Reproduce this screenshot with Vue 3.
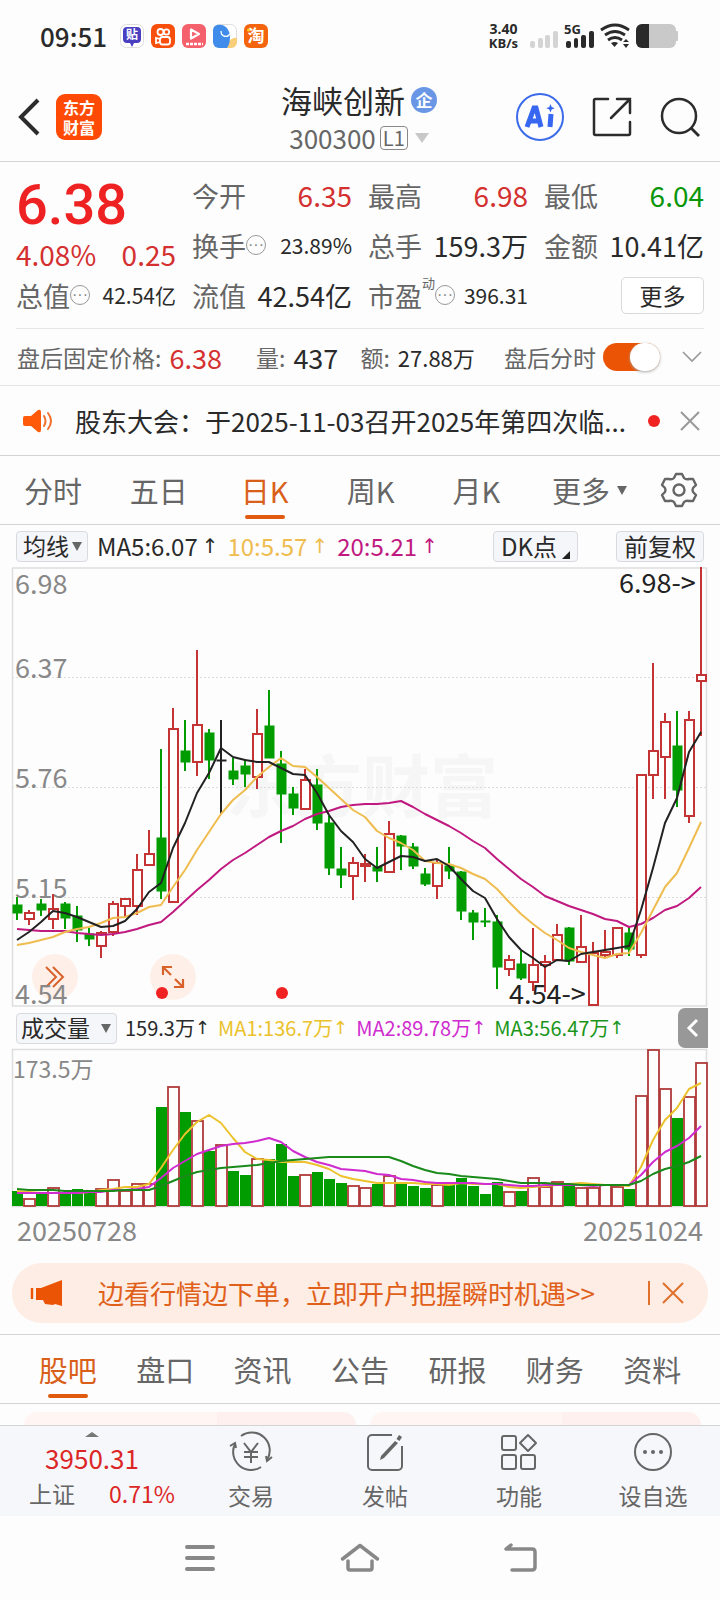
<script setup>
import { ref } from 'vue'

const afterHours = ref(true)
const period = ref('日K')
const section = ref('股吧')
const periods = ['分时', '五日', '日K', '周K', '月K']
const sections = ['股吧', '盘口', '资讯', '公告', '研报', '财务', '资料']

const STEP = 12
const cx = (i) => 5 + i * STEP

// kind (u: up, d: down, n: flat), high, body top, body bottom, low, in chart units
const candles = [
  ['d', 330, 338, 346, 353], ['u', 343, 346, 352, 358], ['d', 332, 337, 343, 349], ['u', 327, 342, 352, 362],
  ['d', 335, 337, 351, 362], ['d', 339, 349, 363, 375], ['d', 361, 367, 372, 379], ['u', 364, 366, 379, 391],
  ['u', 334, 337, 365, 369], ['u', 331, 332, 339, 350], ['u', 287, 303, 339, 348], ['u', 263, 287, 298, 299],
  ['d', 182, 271, 324, 332], ['u', 141, 162, 335, 335], ['d', 153, 184, 195, 204], ['u', 83, 158, 195, 209],
  ['d', 162, 166, 193, 212], ['n', 153, 193, 193, 247], ['d', 191, 204, 212, 218], ['d', 192, 199, 207, 220],
  ['u', 142, 167, 210, 222], ['d', 123, 159, 191, 191], ['d', 184, 197, 227, 276], ['d', 220, 227, 241, 248],
  ['u', 202, 213, 242, 243], ['d', 202, 218, 256, 263], ['d', 249, 256, 301, 308], ['d', 280, 302, 308, 321],
  ['u', 290, 296, 309, 333], ['u', 287, 297, 299, 315], ['d', 280, 300, 304, 315], ['u', 254, 267, 305, 305],
  ['d', 268, 269, 279, 303], ['d', 276, 280, 299, 302], ['d', 301, 307, 317, 319], ['u', 293, 296, 319, 332],
  ['d', 280, 299, 304, 312], ['d', 304, 305, 344, 353], ['d', 343, 346, 355, 373], ['d', 341, 354, 355, 360],
  ['d', 348, 355, 400, 422], ['u', 388, 393, 402, 409], ['d', 384, 397, 411, 413], ['u', 361, 398, 415, 424],
  ['u', 388, 395, 398, 425], ['u', 357, 368, 393, 394], ['d', 360, 361, 394, 398], ['u', 348, 380, 395, 396],
  ['u', 375, 386, 438, 439], ['u', 363, 385, 388, 390], ['u', 360, 361, 388, 391], ['d', 360, 366, 382, 389],
  ['u', 207, 208, 388, 391], ['u', 96, 184, 208, 232], ['u', 146, 155, 190, 232], ['d', 144, 179, 223, 240],
  ['u', 144, 153, 249, 256], ['u', 0, 108, 114, 169]
]
const ma5 = [373, 365, 355, 344, 346, 350, 355, 360, 359, 354, 342, 325, 316, 281, 256, 226, 206, 181, 190, 193, 195, 195, 201, 207, 208, 226, 248, 264, 275, 292, 301, 295, 289, 290, 294, 292, 299, 312, 324, 331, 352, 370, 383, 391, 400, 393, 394, 387, 385, 383, 381, 379, 343, 301, 256, 231, 185, 165]
const ma10 = [378, 376, 373, 370, 365, 362, 360, 356, 351, 350, 346, 340, 338, 320, 303, 283, 265, 247, 233, 223, 210, 200, 191, 199, 200, 210, 221, 232, 243, 250, 264, 271, 276, 283, 294, 296, 297, 301, 307, 312, 322, 335, 347, 357, 366, 373, 381, 385, 388, 391, 387, 386, 366, 343, 320, 306, 281, 255]
const ma20 = [362, 363, 364, 364, 364, 366, 367, 368, 367, 365, 362, 358, 355, 345, 334, 323, 313, 302, 293, 286, 278, 270, 264, 259, 252, 247, 244, 240, 238, 237, 237, 236, 234, 240, 247, 253, 259, 266, 274, 281, 292, 302, 312, 320, 329, 334, 339, 343, 347, 352, 354, 360, 357, 351, 343, 339, 331, 320]

const volumes = [15, 8, 13, 19, 12, 17, 13, 18, 27, 16, 23, 23, 99, 120, 94, 86, 55, 62, 35, 31, 48, 47, 62, 30, 32, 34, 27, 23, 21, 19, 22, 31, 22, 20, 18, 22, 22, 28, 20, 12, 24, 15, 15, 29, 20, 25, 22, 19, 19, 22, 20, 17, 111, 157, 118, 88, 110, 144]
const volMa1 = [15, 14, 13, 13, 13, 13, 14, 16, 17, 19, 19, 22, 38, 56, 72, 84, 91, 83, 68, 54, 47, 46, 44, 44, 44, 41, 37, 30, 27, 25, 23, 23, 23, 23, 22, 22, 21, 23, 22, 22, 22, 19, 18, 19, 20, 21, 22, 23, 22, 21, 21, 20, 39, 66, 86, 98, 117, 123]
const volMa2 = [13, 13, 13, 13, 13, 13, 14, 14, 16, 16, 17, 19, 28, 38, 45, 52, 56, 60, 62, 63, 65, 68, 64, 55, 49, 44, 41, 37, 36, 35, 32, 31, 27, 26, 24, 23, 23, 23, 23, 22, 22, 21, 20, 20, 21, 21, 21, 21, 20, 21, 21, 21, 31, 44, 54, 60, 68, 80]
const volMa3 = [17, 16, 16, 16, 15, 15, 15, 15, 15, 16, 16, 16, 20, 25, 30, 34, 36, 38, 39, 40, 41, 43, 45, 46, 47, 48, 49, 49, 49, 49, 49, 49, 45, 40, 36, 33, 32, 30, 29, 28, 27, 25, 23, 23, 23, 22, 22, 21, 21, 21, 21, 21, 25, 32, 37, 40, 44, 50]

const line = (values) => values.map((v, i) => `${cx(i)},${v}`).join(' ')
const volLine = (values) => values.map((v, i) => `${cx(i)},${157 - v}`).join(' ')
</script>

<template>
  <div class="page">
    <header class="status">
      <time class="clock">09:51</time>
      <div class="apps">
        <svg viewBox="0 0 24 24"><rect x=".5" y=".5" width="23" height="23" rx="6" fill="#fff" stroke="#ddd" /><path d="M7 3h10q4 0 4 4v8q0 4-4 4h-3l-2 4-2-4H7q-4 0-4-4V7q0-4 4-4z" fill="#4a3fc0" /><text x="12" y="15" font-size="12" font-weight="700" fill="#fff" text-anchor="middle">贴</text></svg>
        <svg viewBox="0 0 24 24"><rect width="24" height="24" rx="6" fill="#f8500c" /><g fill="none" stroke="#fff" stroke-width="1.800"><circle cx="9.500" cy="8" r="3" /><circle cx="15.500" cy="8" r="2.700" /><rect x="9" y="13" width="10" height="7.500" rx="2.500" /><path d="M9 15l-4-1v5l4-1" /></g></svg>
        <svg viewBox="0 0 24 24"><rect width="24" height="24" rx="6" fill="#f4606c" /><path d="M9 5.500l8 4.500-8 4.500z" fill="none" stroke="#fff" stroke-width="2.200" stroke-linejoin="round" /><path d="M4 20h17" stroke="#fff" stroke-width="2.500" stroke-dasharray="3 1" /></svg>
        <svg viewBox="0 0 24 24"><rect x=".5" y=".5" width="23" height="23" rx="6" fill="#fff" stroke="#ddd" /><path d="M24 14v4a6 6 0 0 1-6 6h-4c0-6 5-11 10-10z" fill="#f8ce78" /><path d="M0 6a6 6 0 0 1 4-5c8-2 13 5 13 12 0 5-1 8-3 11H6a6 6 0 0 1-6-6z" fill="#3f8cea" /><path d="M8 7c0 6 6 7 9 3" fill="none" stroke="#fff" stroke-width="1.300" /></svg>
        <svg viewBox="0 0 24 24"><rect width="24" height="24" rx="6" fill="#f4640c" /><text x="12" y="18" font-size="17" font-weight="700" fill="#fff" text-anchor="middle">淘</text><circle cx="4.500" cy="6" r="1.500" fill="#ffd21e" /></svg>
      </div>
      <div class="rate"><b>3.40</b><b>KB/s</b></div>
      <svg class="signals" viewBox="0 0 150 26">
        <g fill="#d4d4d4"><rect x="0" y="18" width="5" height="7" rx="2" /><rect x="8" y="15" width="5" height="10" rx="2" /><rect x="15" y="12" width="5" height="13" rx="2" /><rect x="23" y="8" width="5" height="17" rx="2" /></g>
        <text x="34" y="11" font-size="13" font-weight="700" fill="#2a2a2a">5G</text>
        <g fill="#2a2a2a"><rect x="36" y="18" width="5" height="7" rx="2" /><rect x="44" y="15" width="4" height="10" rx="2" /><rect x="51" y="12" width="5" height="13" rx="2" /><rect x="59" y="8" width="5" height="17" rx="2" /></g>
        <g fill="none" stroke="#2a2a2a" stroke-width="2.800"><path d="M71 7q14-10 28 0" /><path d="M75 12q10-7 20 0" /><path d="M78 17q7-5 14 0" /></g>
        <path d="M81 20q4-2 7 0l-3.500 4zM93 19l3-3 3 3zM93 21h6l-3 4z" fill="#2a2a2a" />
        <rect x="106" y="1" width="40" height="24" rx="6" fill="#c9c9c9" /><rect x="145" y="8" width="3" height="10" rx="1" fill="#c9c9c9" /><path d="M112 1h7v24h-7a6 6 0 0 1-6-6V7a6 6 0 0 1 6-6z" fill="#2a2a2a" />
      </svg>
    </header>

    <nav class="top">
      <div class="side">
        <button class="plain" aria-label="返回"><svg width="22" height="38" viewBox="0 0 22 38"><path d="M20 2L3 19l17 17" fill="none" stroke="#2c2c2c" stroke-width="4" /></svg></button>
        <span class="brand"><span>东方</span><span>财富</span></span>
      </div>
      <div class="stock">
        <h1>海峡创新<i class="corp">企</i></h1>
        <p>300300<span class="level">L1</span><i class="tri"></i></p>
      </div>
      <div class="side right">
        <button class="plain" aria-label="Ai"><svg width="48" height="48" viewBox="0 0 48 48"><circle cx="24" cy="24" r="23" fill="none" stroke="#3b6bea" stroke-width="2" /><g fill="none" stroke="#3766f0" stroke-width="5"><path d="M11 34l7-19h2l5 19M14 28h10" /><path d="M35 21l-1 13" /></g><path d="M34.500 11l1.200 3 3 1.200-3 1.200-1.200 3-1.200-3-3-1.200 3-1.200z" fill="#3766f0" /></svg></button>
        <button class="plain" aria-label="分享"><svg width="40" height="40" viewBox="0 0 40 40"><g fill="none" stroke="#2c2c2c" stroke-width="2.500" stroke-linecap="round"><path d="M16 2H3.500A1.500 1.500 0 0 0 2 3.500v33A1.500 1.500 0 0 0 3.500 38h33a1.500 1.500 0 0 0 1.500-1.500V25" /><path d="M25 2h13v14M38 2L19 21" /></g></svg></button>
        <button class="plain" aria-label="搜索"><svg width="40" height="40" viewBox="0 0 40 40"><circle cx="19" cy="19" r="17" fill="none" stroke="#2c2c2c" stroke-width="2.500" /><path d="M31 31l8 8" stroke="#2c2c2c" stroke-width="2.800" /></svg></button>
      </div>
    </nav>

    <section class="quote">
      <div class="last">
        <strong>6.38</strong>
        <div class="change"><span>4.08%</span><span>0.25</span></div>
      </div>
      <div class="cell"><span class="name">今开</span><b class="big up">6.35</b></div>
      <div class="cell"><span class="name">最高</span><b class="big up">6.98</b></div>
      <div class="cell"><span class="name">最低</span><b class="big down">6.04</b></div>
      <div class="cell"><span class="name">换手<i class="dots">···</i></span><b class="small">23.89%</b></div>
      <div class="cell"><span class="name">总手</span><b>159.3万</b></div>
      <div class="cell"><span class="name">金额</span><b>10.41亿</b></div>
      <div class="cell"><span class="name">总值<i class="dots">···</i></span><b class="small">42.54亿</b></div>
      <div class="cell"><span class="name">流值</span><b>42.54亿</b></div>
      <div class="cell"><span class="name">市盈<sup>动</sup><i class="dots">···</i></span><b class="small">396.31</b></div>
      <div class="cell end"><button class="more">更多</button></div>
    </section>

    <section class="after">
      <span class="fixed">盘后固定价格: <b class="up">6.38</b></span>
      <span>量: <b>437</b></span>
      <span>额: <b class="mid">27.88万</b></span>
      <label class="toggle">盘后分时<input v-model="afterHours" type="checkbox"></label>
      <button class="plain" aria-label="展开"><svg width="20" height="12" viewBox="0 0 20 12"><path d="M1 1l9 9 9-9" fill="none" stroke="#999" stroke-width="1.600" /></svg></button>
    </section>

    <section class="notice">
      <svg width="30" height="24" viewBox="0 0 30 24"><path d="M2 7h6l7-6q3-1 3 2v18q0 3-3 2l-7-6H2q-2 0-2-2V9q0-2 2-2z" fill="#ff5a0a" /><path d="M21 7q3 5 0 10M25 4q6 8 0 16" fill="none" stroke="#f0702c" stroke-width="2" stroke-linecap="round" /></svg>
      <a href="#">股东大会：于2025-11-03召开2025年第四次临...</a>
      <i class="unread"></i>
      <button class="plain" aria-label="关闭"><svg width="20" height="20" viewBox="0 0 20 20"><path d="M1 1l18 18M19 1L1 19" stroke="#999" stroke-width="2" /></svg></button>
    </section>

    <nav class="periods">
      <button v-for="p in periods" :key="p" :class="['tab', { on: p === period }]" @click="period = p">{{ p }}</button>
      <button class="tab">更多<i class="caret"></i></button>
      <button class="plain gear" aria-label="设置"><svg width="36" height="36" viewBox="0 0 36 36"><g fill="none" stroke="#666" stroke-width="2.400" stroke-linejoin="round"><path d="M15 2h6l2 4q2 2 5 1l4 0 3 6-3 3q-1 2 0 4l3 3-3 6-4 0q-3-1-5 1l-2 4h-6l-2-4q-2-2-5-1l-4 0-3-6 3-3q1-2 0-4l-3-3 3-6 4 0q3 1 5-1z" /><circle cx="18" cy="18" r="5.500" /></g></svg></button>
    </nav>

    <div class="averages">
      <div class="drop"><select aria-label="均线"><option>均线</option></select><i class="caret"></i></div>
      <span class="ma">MA5:6.07<i>↑</i></span>
      <span class="ma yellow">10:5.57<i>↑</i></span>
      <span class="ma purple">20:5.21<i>↑</i></span>
      <button class="chip dk">DK点<i></i></button>
      <button class="chip">前复权</button>
    </div>

    <div class="chart">
      <button class="float first" aria-label="快进"><svg width="20" height="22" viewBox="0 0 20 22"><path d="M1 1l10 10L1 21M8 1l10 10L8 21" fill="none" stroke="#d9622a" stroke-width="2" /></svg></button>
      <button class="float second" aria-label="全屏"><svg width="24" height="24" viewBox="0 0 24 24"><path d="M2 10V2h9M2 2l8 8M22 14v8h-9M22 22l-8-8" fill="none" stroke="#d9622a" stroke-width="2.200" /></svg></button>
      <svg class="plot" viewBox="0 0 696 440" role="img" aria-label="日K线图">
        <text x="214" y="245" font-size="68" font-weight="700" fill="#f6f6f6">东方财富</text>
        <g stroke="#dcdcdc" stroke-dasharray="2 2"><path d="M0 110.500H695M0 220.500H695M0 330.500H695" /></g>
        <rect x=".5" y="1" width="694" height="438" fill="none" stroke="#dedede" stroke-width="1.500" />
        <g class="axis"><text x="3" y="27">6.98</text><text x="3" y="111">6.37</text><text x="3" y="221">5.76</text><text x="3" y="331">5.15</text><text x="3" y="437">4.54</text></g>
        <g v-for="(c, i) in candles" :key="i" :class="['candle', c[0]]">
          <path :d="`M${cx(i)} ${c[1]}V${c[2]}M${cx(i)} ${c[3]}V${c[4]}`" />
          <rect :x="cx(i) - 4" :y="c[2]" width="9" :height="Math.max(c[3] - c[2], 1)" />
        </g>
        <g class="lines">
          <polyline :points="line(ma20)" stroke="#c01a80" />
          <polyline :points="line(ma10)" stroke="#efbc50" />
          <polyline :points="line(ma5)" stroke="#222" />
        </g>
        <circle cx="150" cy="426" r="6" fill="#f02222" /><circle cx="270" cy="426" r="6" fill="#f02222" />
        <g class="mark"><text x="607" y="26">6.98-&gt;</text><text x="497" y="437">4.54-&gt;</text></g>
      </svg>
    </div>

    <div class="volume-head">
      <div class="drop"><select aria-label="指标"><option>成交量</option></select><i class="caret"></i></div>
      <span class="vol">159.3万<i>↑</i></span>
      <span class="vol gold">MA1:136.7万<i>↑</i></span>
      <span class="vol violet">MA2:89.78万<i>↑</i></span>
      <span class="vol green">MA3:56.47万<i>↑</i></span>
      <button class="collapse" aria-label="收起"><svg width="12" height="20" viewBox="0 0 12 20"><path d="M10 2l-8 8 8 8" fill="none" stroke="#fff" stroke-width="3" /></svg></button>
    </div>

    <div class="chart">
      <svg class="plot" viewBox="0 0 696 158" role="img" aria-label="成交量图">
        <rect x=".5" y=".5" width="694" height="157" fill="none" stroke="#dedede" stroke-width="1.500" />
        <text class="axis vmax" x="1" y="29">173.5万</text>
        <template v-for="(v, i) in volumes" :key="i">
          <rect v-if="candles[i][0] === 'd'" :x="cx(i) - 5" :y="157 - v" width="11" :height="v" fill="#009c00" />
          <rect v-else :x="cx(i) - 5" :y="158 - v" width="11" :height="v - 1" fill="#fff" stroke="#b03a3a" stroke-width="1.800" />
        </template>
        <g class="lines">
          <polyline :points="volLine(volMa1)" stroke="#ecc22c" />
          <polyline :points="volLine(volMa2)" stroke="#cf2bcf" />
          <polyline :points="volLine(volMa3)" stroke="#1a8a1a" />
        </g>
      </svg>
    </div>
    <div class="dates"><time>20250728</time><time>20251024</time></div>

    <aside class="promo">
      <svg width="32" height="26" viewBox="0 0 32 26"><path d="M1 8v11" stroke="#ea5404" stroke-width="2.400" /><path d="M5 8h5L31 0v26l-7-2-2 1-8-1-2-4H5z" fill="#ea5404" /></svg>
      <a href="#">边看行情边下单，立即开户把握瞬时机遇&gt;&gt;</a>
      <button class="plain" aria-label="关闭广告"><svg width="22" height="22" viewBox="0 0 22 22"><path d="M1 1l20 20M21 1L1 21" stroke="#e0702c" stroke-width="2" /></svg></button>
    </aside>

    <nav class="sections">
      <button v-for="s in sections" :key="s" :class="['tab', { on: s === section }]" @click="section = s">{{ s }}</button>
    </nav>
    <div class="cards"><div></div><div></div></div>

    <footer class="dock">
      <a class="index" href="#"><i></i><b>3950.31</b><span>上证<em>0.71%</em></span></a>
      <a href="#"><svg viewBox="0 0 42 40"><g fill="none" stroke="#666" stroke-width="2"><path d="M11 4a18 18 0 0 1 26 24M31 35A18 18 0 0 1 5 12" /><path d="M42 25l-5 4-1-5M0 14l5-3 1 5" /><path d="M14 11l7 9 7-9M14 20h14M14 25h14M21 20v11" /></g></svg>交易</a>
      <a href="#"><svg viewBox="0 0 42 40"><path d="M28 3H8a4 4 0 0 0-4 4v27a4 4 0 0 0 4 4h26a4 4 0 0 0 4-4V14" fill="none" stroke="#666" stroke-width="2" /><path d="M35 3l3 2-2.500 4-3-2zM31 9l3 2-14 15-4 2 1-4z" fill="#666" /></svg>发帖</a>
      <a href="#"><svg viewBox="0 0 42 40"><g fill="none" stroke="#666" stroke-width="2"><rect x="4" y="4" width="14" height="14" rx="2" /><rect x="4" y="23" width="14" height="14" rx="2" /><rect x="23" y="23" width="14" height="14" rx="2" /><path d="M30 3l8 8-8 8-8-8z" stroke-linejoin="round" /></g></svg>功能</a>
      <a href="#"><svg viewBox="0 0 42 40"><circle cx="21" cy="20" r="18" fill="none" stroke="#666" stroke-width="2" /><g fill="#666"><circle cx="13" cy="20" r="2" /><circle cx="21" cy="20" r="2" /><circle cx="29" cy="20" r="2" /></g></svg>设自选</a>
    </footer>

    <nav class="system">
      <button class="plain" aria-label="菜单"><svg width="40" height="30" viewBox="0 0 40 30"><path d="M7 4h26M7 15h26M7 26h26" stroke="#888" stroke-width="4" stroke-linecap="round" /></svg></button>
      <button class="plain" aria-label="主页"><svg width="40" height="30" viewBox="0 0 40 30"><path d="M2.500 16L20 2.500 37.500 16M8 18v7q0 2 2 2h20q2 0 2-2v-7" fill="none" stroke="#888" stroke-width="3.500" stroke-linecap="round" stroke-linejoin="round" /></svg></button>
      <button class="plain" aria-label="后退"><svg width="40" height="30" viewBox="0 0 40 30"><path d="M11 2L6 6h26q3 0 3 3v15q0 3-3 3H12" fill="none" stroke="#888" stroke-width="3.500" stroke-linecap="round" stroke-linejoin="round" /></svg></button>
    </nav>
  </div>
</template>

<style>
body { background: #fdfdfd; }
</style>

<style scoped>
.page { font-family: "Noto Sans CJK SC", "Noto Sans", sans-serif; color: #2a2a2a; background: #fdfdfd; }
.page * { box-sizing: border-box; }
button, select { font: inherit; color: inherit; margin: 0; padding: 0; }
a { color: inherit; text-decoration: none; }
b, i, em, strong { font-weight: 400; font-style: normal; }
h1, p { margin: 0; font-weight: 400; }
svg { display: block; flex: none; overflow: visible; }
.plain { border: 0; background: none; display: flex; align-items: center; justify-content: center; }

.status { height: 72px; padding: 0 40px; display: flex; align-items: center; }
.clock { font-size: 26px; line-height: 36px; font-weight: 500; width: 80px; }
.apps { display: flex; gap: 7px; flex: 1; }
.apps svg { width: 24px; height: 24px; }
.rate { display: flex; flex-direction: column; align-items: center; margin-right: 12px; font-family: "Open Sans", sans-serif; }
.rate b { font-size: 13px; line-height: 14px; font-weight: 700; }
.rate b:first-child { font-size: 14px; }
.signals { width: 150px; height: 26px; font-family: "Open Sans", sans-serif; }

.top { height: 90px; padding: 0 20px 0 18px; display: grid; grid-template-columns: 1fr auto 1fr; align-items: center; border-bottom: 1px solid #d4d4d4; }
.side { display: flex; align-items: center; gap: 16px; }
.side.right { justify-content: flex-end; gap: 28px; }
.brand { width: 46px; height: 46px; border-radius: 9px; background: #ff4a05; color: #fff; font-weight: 700; font-size: 16px; line-height: 20px; display: flex; flex-direction: column; align-items: center; justify-content: center; }
.stock h1 { font-size: 31px; line-height: 40px; display: flex; align-items: center; gap: 6px; }
.corp { width: 26px; height: 26px; border-radius: 50%; background: #6a96e6; color: #fff; font-size: 17px; font-weight: 700; line-height: 25px; text-align: center; }
.stock { padding-top: 2px; }
.stock p { font-size: 26px; line-height: 36px; color: #666; display: flex; align-items: center; justify-content: center; gap: 4px; }
.level { border: 1px solid #888; border-radius: 4px; font-size: 20px; line-height: 22px; padding: 0 2px; }
.tri { border: 7px solid transparent; border-top: 10px solid #c8c8c8; border-bottom: 0; margin-left: 3px; }

.quote { margin: 0 16px; padding: 8px 0; display: grid; grid-template-columns: repeat(4, 1fr); grid-auto-rows: 50px; column-gap: 16px; border-bottom: 1px solid #e6e6e6; }
.last { grid-row: span 2; padding-top: 2px; color: #ee2222; }
.last strong { display: block; font-family: Roboto, sans-serif; font-size: 56px; line-height: 66px; font-weight: 500; }
.change { display: flex; justify-content: space-between; font-size: 28px; line-height: 32px; color: #d43030; }
.cell { display: flex; align-items: center; justify-content: space-between; white-space: nowrap; }
.cell .name { font-size: 27px; color: #666; display: flex; align-items: center; }
.cell b { font-size: 27px; }
.cell b.big { font-size: 28px; }
.cell b.small { font-size: 21px; }
.cell.end { justify-content: flex-end; }
b.up { color: #d43030; }
b.down { color: #0a960a; }
.cell sup { font-size: 13px; line-height: 14px; align-self: flex-start; }
.dots { width: 20px; height: 20px; border: 1px solid #999; border-radius: 50%; color: #888; font-size: 16px; line-height: 17px; display: inline-flex; justify-content: center; font-family: "Liberation Sans", sans-serif; }
.more { width: 83px; height: 37px; border: 1px solid #dadada; border-radius: 5px; background: #fff; font-size: 23px; line-height: 33px; }

.after { height: 57px; padding: 0 18px 0 17px; display: flex; align-items: center; justify-content: space-between; font-size: 23px; color: #666; border-bottom: 1px solid #e6e6e6; white-space: nowrap; }
.after span { display: flex; align-items: center; gap: 8px; }
.after .fixed { margin-right: 12px; }
.after b { font-size: 27px; color: #2a2a2a; }
.after b.mid { font-size: 22px; }
.after b.up { color: #d43030; }
.toggle { display: flex; align-items: center; gap: 7px; margin-left: 7px; }
.toggle input { appearance: none; margin: 0; width: 57px; height: 28px; border-radius: 14px; background: #ccc; display: flex; }
.toggle input::before { content: ""; width: 30px; height: 28px; border-radius: 15px; background: #fff; box-shadow: 0 1px 3px #aaa; }
.toggle input:checked { background: #ea5404; justify-content: flex-end; }

.notice { height: 70px; padding: 0 20px 0 23px; display: flex; align-items: center; border-bottom: 1px solid #d4d4d4; }
.notice a { flex: 1; margin: 0 0 0 22px; font-size: 26px; line-height: 38px; white-space: nowrap; }
.unread { width: 12px; height: 12px; border-radius: 50%; background: #f02222; margin-right: 20px; }

.periods { height: 69px; display: grid; grid-template-columns: repeat(5, 15fr) 17fr 10fr; border-bottom: 1px solid #d4d4d4; }
.periods .gear { padding-right: 12px; }
.tab { position: relative; height: 68px; border: 0; background: none; font-size: 29px; line-height: 40px; color: #666; display: flex; align-items: center; justify-content: center; gap: 7px; }
.tab.on { color: #d9601a; }
.tab.on::after { content: ""; position: absolute; left: 50%; bottom: 5px; width: 40px; height: 4px; margin-left: -20px; border-radius: 2px; background: #e05a10; }
.caret { border: 5px solid transparent; border-top: 9px solid #666; border-bottom: 0; }

.averages { height: 42px; padding: 0 16px; display: flex; align-items: center; gap: 9px; white-space: nowrap; }
.drop { position: relative; display: flex; align-items: center; }
.drop select { appearance: none; height: 31px; width: 72px; padding: 0 0 2px 6px; border: 1px solid #d8dade; border-radius: 4px; background: #f5f6f9; font-size: 23px; line-height: 27px; }
.drop .caret { position: absolute; right: 6px; pointer-events: none; }
.ma { font-size: 24px; line-height: 34px; display: flex; align-items: center; gap: 4px; }
.ma i, .vol i { font-family: "DejaVu Sans", sans-serif; font-size: 20px; line-height: 24px; }
.yellow { color: #efbc50; }
.purple { color: #c01a80; }
.chip { height: 31px; padding: 0 7px 2px; border: 1px solid #d8dade; border-radius: 4px; background: #f5f6f9; font-size: 24px; line-height: 27px; }
.chip.dk { margin-left: auto; margin-right: 29px; display: flex; gap: 5px; }
.chip.dk i { align-self: flex-end; border: 4px solid transparent; border-right-color: #222; border-bottom-color: #222; }

.chart { position: relative; margin: 0 12px; }
.plot { position: relative; z-index: 1; width: 100%; height: auto; pointer-events: none; }
.axis { font-size: 27px; fill: #888; }
.vmax { font-size: 23px; }
.mark { font-size: 27px; fill: #222; }
.candle path, .candle rect { fill: none; stroke-width: 2; }
.u path, .u rect { stroke: #c43434; }
.candle.u rect { fill: #fff; }
.d path, .d rect { stroke: #009c00; }
.candle.d rect { fill: #009c00; stroke-width: 1; }
.n path, .n rect { stroke: #222; }
.candle.n rect { stroke-width: 1; }
.lines polyline { fill: none; stroke-width: 2; stroke-linejoin: round; }
.float { position: absolute; bottom: 7px; width: 46px; height: 46px; border: 0; border-radius: 50%; background: #fef0e9; display: flex; align-items: center; justify-content: center; }
.float.first { left: 20px; }
.float.second { left: 138px; }

.volume-head { height: 42px; padding-left: 16px; margin-right: 12px; display: flex; align-items: center; gap: 8px; white-space: nowrap; }
.volume-head .drop select { width: 101px; padding-left: 4px; }
.vol { font-size: 20px; line-height: 30px; display: flex; align-items: center; }
.vol i { font-size: 18px; }
.gold { color: #ecc22c; }
.violet { color: #cf2bcf; }
.green { color: #1a961a; }
.collapse { width: 30px; height: 40px; margin-left: auto; border: 0; border-radius: 7px 0 0 7px; background: #989898; display: flex; align-items: center; justify-content: center; }
.dates { padding: 0 17px; height: 56px; display: flex; justify-content: space-between; font-size: 27px; line-height: 46px; color: #888; }

.promo { margin: 0 12px; height: 60px; border-radius: 30px; background: #fdede4; color: #e0601a; padding: 0 24px 0 19px; display: flex; align-items: center; }
.promo a { flex: 1; margin-left: 35px; font-size: 26px; line-height: 38px; white-space: nowrap; }
.promo button { border-left: 2px solid #e0702c; padding-left: 12px; height: 24px; }

.sections { height: 70px; margin-top: 11px; padding: 0 19px; display: grid; grid-template-columns: repeat(7, 1fr); border-top: 1px solid #d4d4d4; border-bottom: 1px solid #d4d4d4; }
.cards { height: 21px; padding: 8px 19px 0 24px; display: flex; gap: 14px; }
.cards div { flex: 1; border-radius: 14px 14px 0 0; background: linear-gradient(90deg, #fff6f4 58%, #fdf0ee 58%); }

.dock { height: 91px; border-top: 1px solid #d4d4d4; background: #f6f7fa; display: grid; grid-template-columns: 184px repeat(4, 1fr); color: #666; }
.dock a { display: flex; flex-direction: column; align-items: center; font-size: 23px; line-height: 34px; padding-top: 6px; }
.dock svg { width: 42px; height: 40px; margin-bottom: 6px; }
.index i { border: 7px solid transparent; border-bottom: 5px solid #777; border-top: 0; }
.index b { font-size: 26px; line-height: 36px; margin-top: 3px; color: #dc2626; }
.dock .index span { display: flex; gap: 34px; margin-left: 20px; }
.index em { color: #dc2626; }
.system { height: 83px; padding: 0 120px; display: grid; grid-template-columns: repeat(3, 1fr); }
</style>
